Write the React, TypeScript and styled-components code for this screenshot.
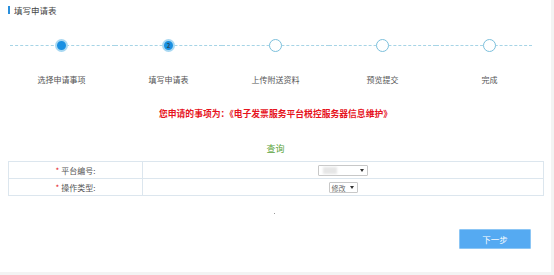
import React, { FC } from 'react';
import styled, { createGlobalStyle } from 'styled-components';

const GlobalStyle = createGlobalStyle`
  html, body {
    margin: 0;
    padding: 0;
    background: #f3f3f3;
  }
  body {
    font-family: "Noto Sans CJK SC", "Noto Sans", sans-serif;
    color: #555;
  }
`;

const Panel = styled.div`
  box-sizing: border-box;
  width: 551px;
  height: 272px;
  background: #fff;
  position: relative;
`;

const Header = styled.div`
  display: flex;
  align-items: center;
  height: 20px;
  padding-left: 8px;
  font-size: 8.5px;
  color: #444;

  &::before {
    content: '';
    width: 2px;
    height: 8px;
    margin-right: 4px;
    background: #2a8fdc;
  }
`;

const Steps = styled.ul`
  display: flex;
  margin: 19px 0 0;
  padding: 0 0 0 8px;
  list-style: none;
`;

const Step = styled.li<{ $first?: boolean; $last?: boolean }>`
  position: relative;
  display: flex;
  flex-direction: column;
  align-items: center;
  width: 107px;

  &::before {
    content: '';
    position: absolute;
    top: 6px;
    left: ${(p) => (p.$first ? '2px' : '0')};
    right: ${(p) => (p.$last ? '11px' : '0')};
    border-top: 1px dashed #a6d4e6;
  }
`;

const Dot = styled.span<{ $done?: boolean }>`
  position: relative;
  z-index: 1;
  box-sizing: border-box;
  display: flex;
  align-items: center;
  justify-content: center;
  width: 13px;
  height: 13px;
  border-radius: 50%;
  font-size: 6px;
  font-weight: bold;
  color: #2a4a5c;
  background: ${(p) => (p.$done ? '#1a90e2' : '#fff')};
  border: ${(p) => (p.$done ? '2px solid #a8d8f2' : '1.5px solid #7cc0dc')};
`;

const StepLabel = styled.span`
  margin-top: 23px;
  font-size: 8px;
  line-height: 10px;
  color: #555;
  white-space: nowrap;
`;

const Notice = styled.div`
  margin-top: 23px;
  text-align: center;
  font-size: 8.8px;
  line-height: 12px;
  font-weight: bold;
  color: #e6141e;
`;

const QueryTitle = styled.div`
  margin-top: 23px;
  text-align: center;
  font-size: 9px;
  line-height: 12px;
  color: #5aa33c;
`;

const FormTable = styled.table`
  box-sizing: border-box;
  width: 536px;
  margin: 6px 0 0 8px;
  border-collapse: collapse;
  font-size: 8px;
  color: #555;

  td {
    height: 16px;
    padding: 0;
    border: 1px solid #dce6ee;
    text-align: center;
  }

  td:first-child {
    width: 133px;
  }
`;

const Star = styled.span`
  color: #e6141e;
  margin-right: 2px;
`;

const Select = styled.span<{ $width: number }>`
  box-sizing: border-box;
  display: inline-flex;
  align-items: center;
  justify-content: space-between;
  width: ${(p) => p.$width}px;
  height: 11px;
  padding: 0 3px 0 2px;
  border: 1px solid #c8c8c8;
  border-radius: 1px;
  background: #fff;
  font-size: 7px;
  color: #666;
  vertical-align: middle;

  &::after {
    content: '';
    border-left: 2.5px solid transparent;
    border-right: 2.5px solid transparent;
    border-top: 3px solid #333;
  }
`;

const Blur = styled.span`
  width: 14px;
  height: 7px;
  margin-left: 2px;
  background: #e6e6e6;
  filter: blur(1px);
`;

const Mark = styled.div`
  margin: 17px 0 0 274px;
  width: 1px;
  height: 1px;
  background: #999;
`;

const Footer = styled.div`
  display: flex;
  justify-content: flex-end;
  margin-top: 15px;
  padding-right: 20px;
`;

const NextButton = styled.button`
  width: 72px;
  height: 20px;
  padding: 0;
  border: 1px solid #8cc6f5;
  border-radius: 1px;
  background: #55aaf2;
  color: #fff;
  font-family: inherit;
  font-size: 8.5px;
`;

const steps = ['选择申请事项', '填写申请表', '上传附送资料', '预览提交', '完成'];
const current = 1;

const App: FC = () => (
  <>
    <GlobalStyle />
    <Panel>
      <Header>填写申请表</Header>
      <Steps>
        {steps.map((label, i) => (
          <Step key={label} $first={i === 0} $last={i === steps.length - 1}>
            <Dot $done={i <= current}>{i === current ? '2' : ''}</Dot>
            <StepLabel>{label}</StepLabel>
          </Step>
        ))}
      </Steps>
      <Notice>您申请的事项为：《电子发票服务平台税控服务器信息维护》</Notice>
      <QueryTitle>查询</QueryTitle>
      <FormTable>
        <tbody>
          <tr>
            <td><Star>*</Star>平台编号:</td>
            <td>
              <Select $width={50}><Blur /></Select>
            </td>
          </tr>
          <tr>
            <td><Star>*</Star>操作类型:</td>
            <td>
              <Select $width={29}>修改</Select>
            </td>
          </tr>
        </tbody>
      </FormTable>
      <Mark />
      <Footer>
        <NextButton>下一步</NextButton>
      </Footer>
    </Panel>
  </>
);

export default App;
